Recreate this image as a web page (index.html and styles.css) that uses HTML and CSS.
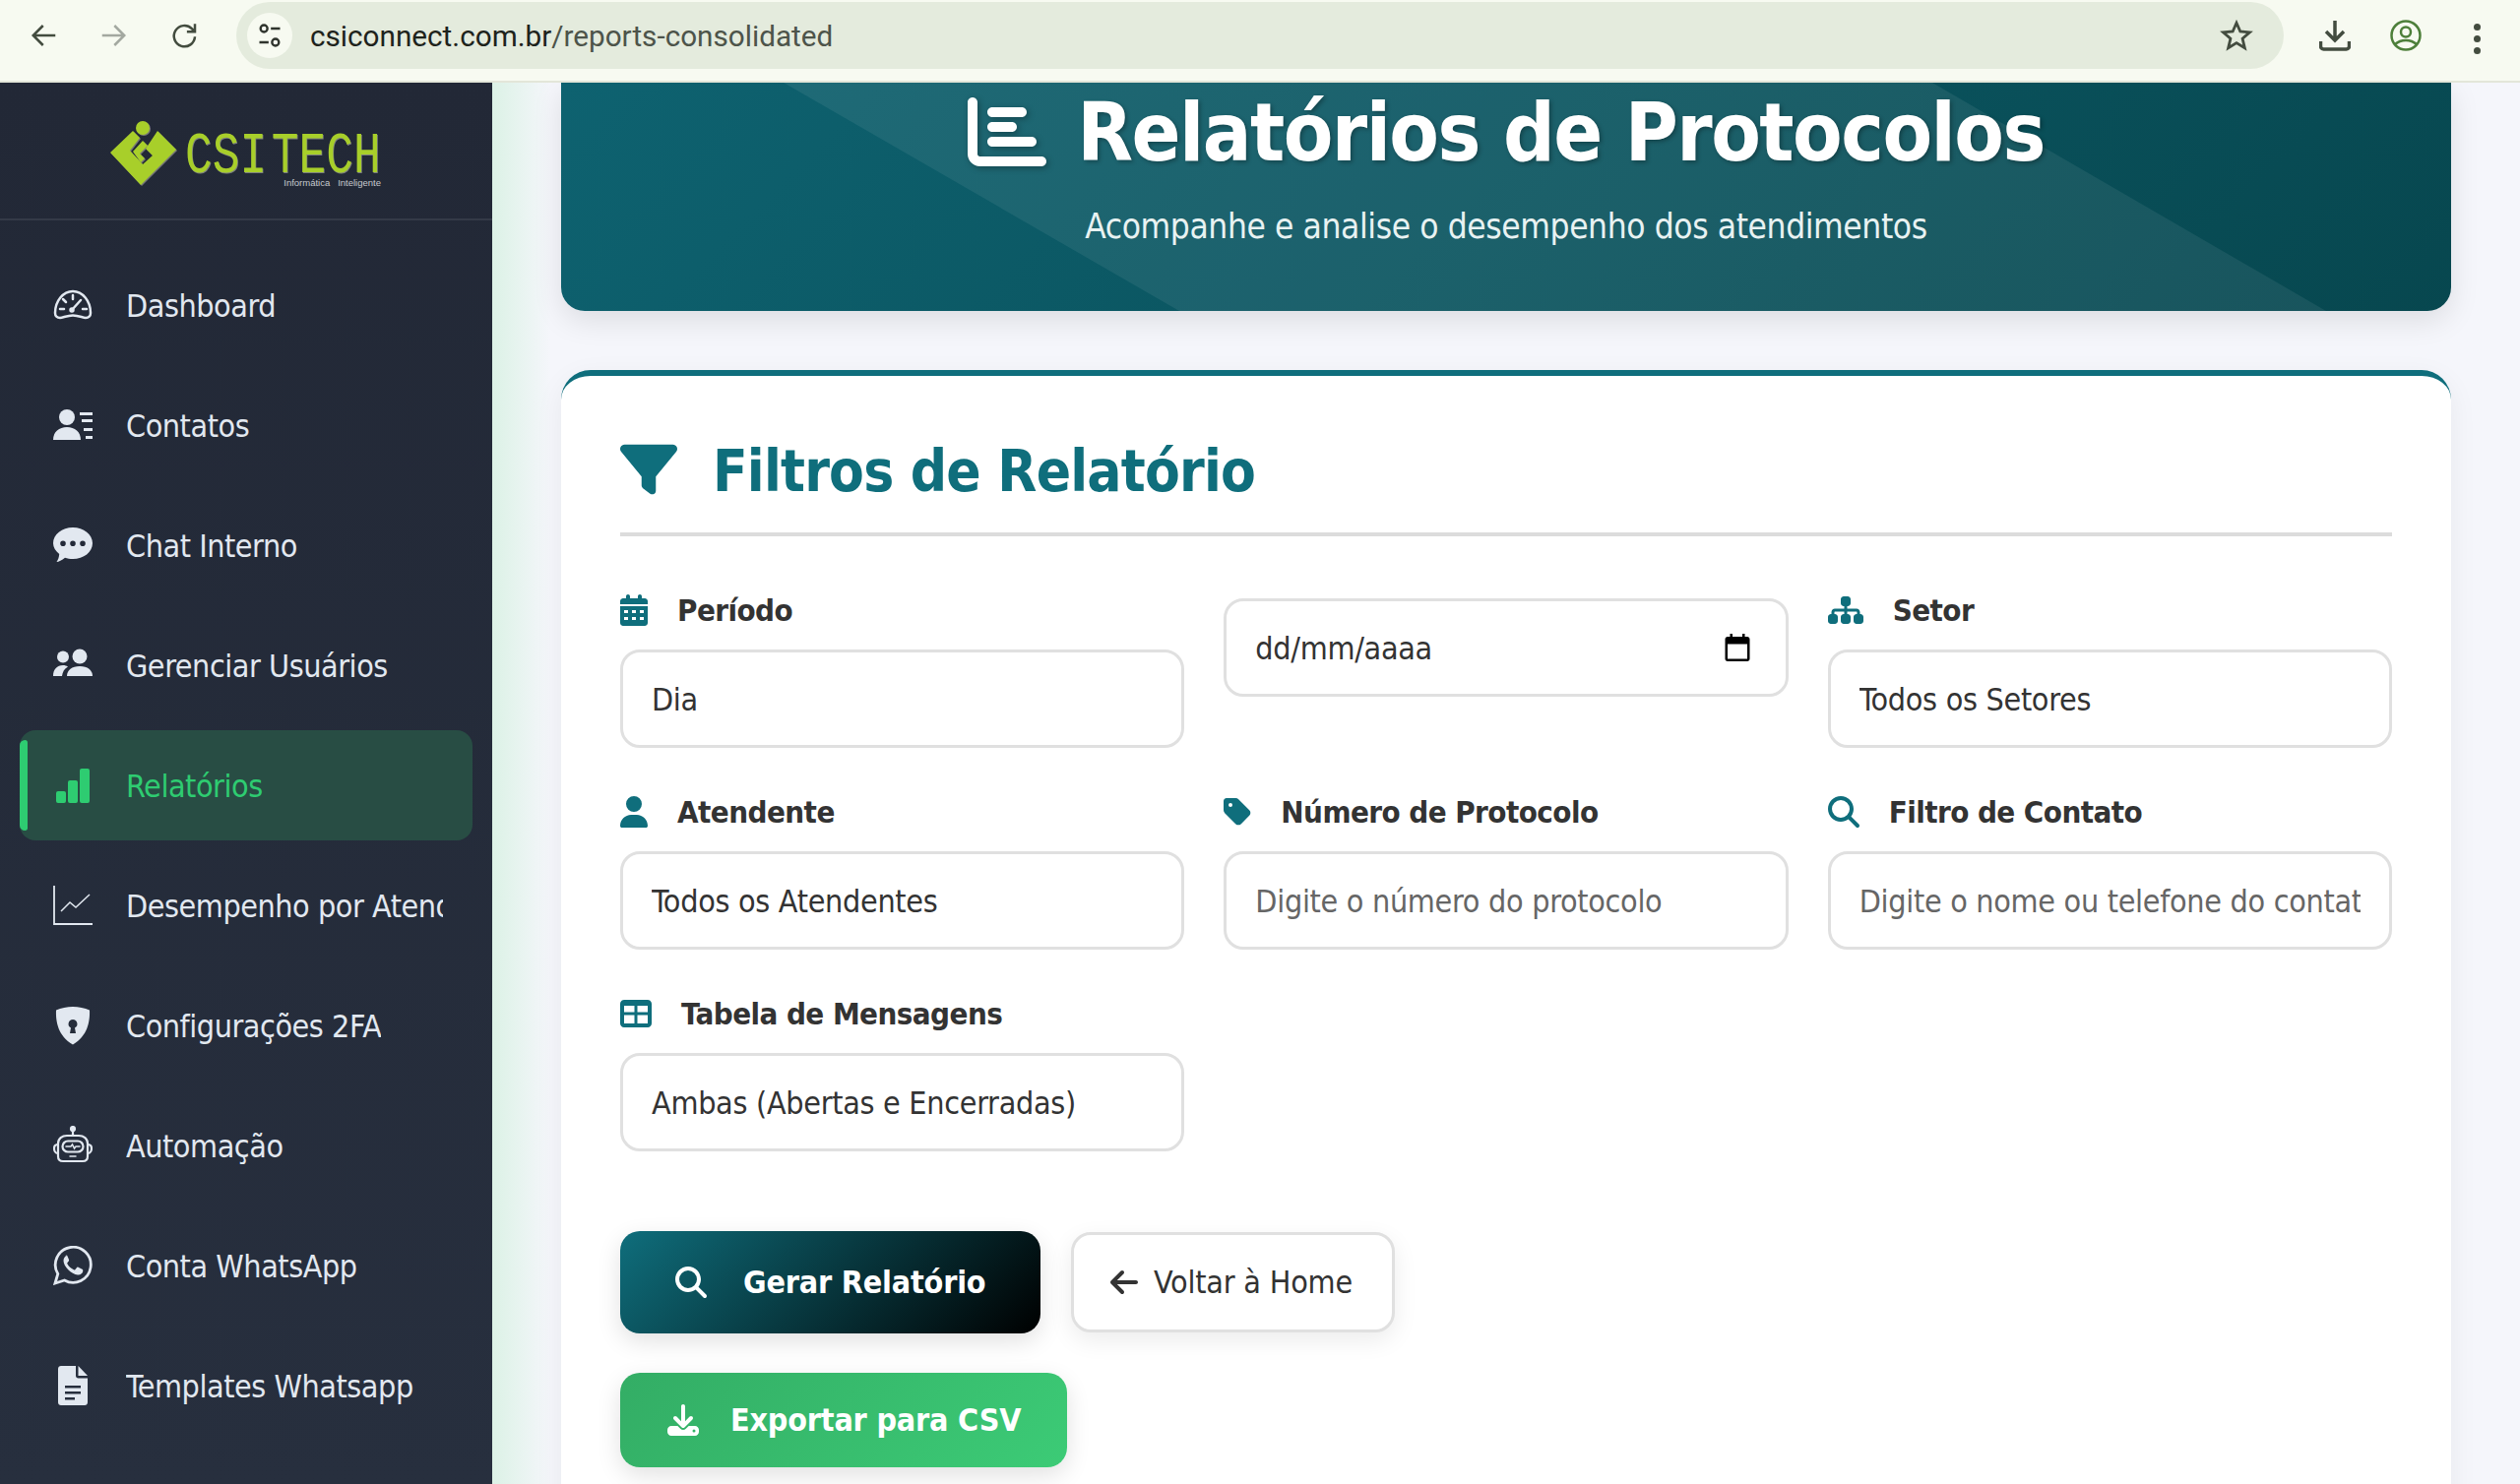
FILE: index.html
```html
<!DOCTYPE html>
<html lang="pt-BR">

<head>
    <meta charset="UTF-8">
    <title>Relatórios de Protocolos</title>
    <link rel="stylesheet" href="styles.css">
</head>

<body>

    <!-- Browser toolbar -->
    <header class="toolbar">
        <svg class="tb-icon tb-back" viewBox="0 0 24 24"><path d="M21 12H4M11 4l-8 8 8 8"/></svg>
        <svg class="tb-icon tb-forward" viewBox="0 0 24 24"><path d="M3 12h17M13 4l8 8-8 8"/></svg>
        <svg class="tb-icon tb-reload" viewBox="0 0 24 24"><path d="M20 13a8.5 8.5 0 1 1-2.5-6.5L20 9M20 2.5V9h-6.500"/></svg>
        <div class="omnibox">
            <span class="site-info">
                <svg viewBox="0 0 24 24"><circle cx="7" cy="6" r="3"/><path d="M13 6h8M3 18h8"/><circle cx="17" cy="18" r="3"/></svg>
            </span>
            <span class="url"><span class="url-host">csiconnect.com.br</span>/reports-consolidated</span>
            <svg class="tb-star" viewBox="0 0 24 24"><path d="M12 3l2.700 6.200 6.800.6-5.200 4.500 1.600 6.700-5.900-3.600-5.900 3.600 1.600-6.700-5.200-4.500 6.800-.6z"/></svg>
        </div>
        <svg class="tb-download" viewBox="0 0 32 32"><path d="M16 1v18M7 12l9 9 9-9" fill="none"/><path d="M1.500 22v5a3 3 0 0 0 3 3h23a3 3 0 0 0 3-3v-5" fill="none"/></svg>
        <svg class="tb-profile" viewBox="0 0 32 32"><circle cx="16" cy="16" r="14.500"/><circle cx="16" cy="12.500" r="5"/><path d="M5 25c6-5.500 16-5.500 22 0"/></svg>
        <div class="tb-menu"><i></i><i></i><i></i></div>
    </header>

    <div class="layout">

        <!-- Sidebar -->
        <aside class="sidebar">
            <div class="logo">
                <svg class="logo-mark" viewBox="0 0 68 66">
                    <circle cx="33" cy="7" r="7"/>
                    <path d="M23 10l7 7-10 13 13 14 10-9-7-7 12-18 19 19-36 36L0 32z"/>
                    <path d="M33 20l5 5-8 8 5 5-4 4-8-11z"/>
                </svg>
                <div class="logo-words">
                    <div class="logo-name"><span>CSI TECH</span></div>
                    <div class="logo-tag">Informática &nbsp; Inteligente</div>
                </div>
            </div>
            <nav class="menu">
                <a class="menu-item">
                    <svg class="menu-icon" viewBox="0 0 40 40" fill="none" stroke="currentColor" stroke-width="2.500" stroke-linecap="round"><path d="M7 33c-3 0-5-2-5-5C2 16 10 6 20 6s18 10 18 22c0 3-2 5-5 5-3 0-7-2.500-13-2.500S10 33 7 33z"/><path d="M19 25l9-10M20 10v4M10 14l3 3M7 24h4M30 24h4"/><circle cx="19" cy="25" r="1.500"/></svg>
                    <span class="menu-label">Dashboard</span>
                </a>
                <a class="menu-item">
                    <svg class="menu-icon" viewBox="0 0 40 40" fill="currentColor"><circle cx="14" cy="12" r="8"/><path d="M0 35c0-8 6-13 14-13s14 5 14 13z"/><path d="M27 7h13v3H27zM29 14h11v3H29zM31 23h9v3h-9zM33 31h7v3h-7z"/></svg>
                    <span class="menu-label">Contatos</span>
                </a>
                <a class="menu-item">
                    <svg class="menu-icon" viewBox="0 0 40 40" fill="currentColor"><path fill-rule="evenodd" d="M20 2c11 0 20 7 20 16s-9 16-20 16c-3 0-5.500-.5-8-1.300C9 35 5.500 37 3.500 37c1.500-2 2.500-5 2.700-8C2.500 26 0 22.200 0 18 0 9 9 2 20 2zM10 15.500a2.800 2.800 0 1 0 0 5.600 2.800 2.800 0 0 0 0-5.600zm10 0a2.800 2.800 0 1 0 0 5.600 2.800 2.800 0 0 0 0-5.600zm10 0a2.800 2.800 0 1 0 0 5.600 2.800 2.800 0 0 0 0-5.600z"/></svg>
                    <span class="menu-label">Chat Interno</span>
                </a>
                <a class="menu-item">
                    <svg class="menu-icon" viewBox="0 0 40 40" fill="currentColor"><circle cx="10" cy="11.500" r="6"/><circle cx="27" cy="11" r="7.500"/><path d="M0 31c0-7 4-11 10-11 2 0 3.500.5 5 1.500-3.500 2-5.500 5-6 9.500z"/><path d="M14 31c0-6 5-10 13-10s13 4 13 10z"/></svg>
                    <span class="menu-label">Gerenciar Usuários</span>
                </a>
                <a class="menu-item is-active">
                    <svg class="menu-icon" viewBox="0 0 40 40" fill="currentColor"><rect x="3" y="26" width="10" height="12" rx="2"/><rect x="15" y="15" width="10" height="23" rx="2"/><rect x="27" y="3" width="10" height="35" rx="2"/></svg>
                    <span class="menu-label">Relatórios</span>
                </a>
                <a class="menu-item">
                    <svg class="menu-icon" viewBox="0 0 40 40" fill="none" stroke="currentColor" stroke-width="1.800"><path d="M1 0v39h39"/><path d="M8 26l9-9 6 5 14-13" stroke-width="1.500"/></svg>
                    <span class="menu-label">Desempenho por Atendente</span>
                </a>
                <a class="menu-item">
                    <svg class="menu-icon" viewBox="0 0 40 40" fill="currentColor"><path fill-rule="evenodd" d="M20 1c6 0 12 1.500 17 3.500.5 12-2 26-17 35C5 30.500 2.500 16.500 3 4.500 8 2.500 14 1 20 1zm0 13a4.500 4.500 0 0 0-2 8.500L17 28h6l-1-5.500A4.500 4.500 0 0 0 20 14z"/></svg>
                    <span class="menu-label">Configurações 2FA</span>
                </a>
                <a class="menu-item">
                    <svg class="menu-icon" viewBox="0 0 40 40" fill="none" stroke="currentColor" stroke-width="2.200" stroke-linecap="round"><circle cx="20" cy="3" r="2" fill="currentColor"/><path d="M20 5v5"/><path d="M14 10h12c5 0 9 3 9 8v13c0 3-2 5-5 5H10c-3 0-5-2-5-5V18c0-5 4-8 9-8z"/><path d="M5 19c-3 0-4 2-4 4s1 5 4 5M35 19c3 0 4 2 4 4s-1 5-4 5"/><rect x="9.500" y="15.500" width="21" height="11" rx="5.500"/><path d="M13 21h5l1.500-2 2 4 1.500-2h4M17 31h6" stroke-width="1.500"/></svg>
                    <span class="menu-label">Automação</span>
                </a>
                <a class="menu-item">
                    <svg class="menu-icon" viewBox="0 0 40 40"><path fill="none" stroke="currentColor" stroke-width="2.800" d="M2 38l2.800-9.500A18 18 0 1 1 11.500 35z"/><path fill="currentColor" d="M14 10c-1.500 0-3.500 2-3.500 5 0 6 8 14 14.500 14.500 3 .2 5-2 5.200-3.500.2-1.200 0-2-.7-2.300l-4-2c-.8-.3-1.300 0-1.800.7l-1.400 1.800c-.4.400-.8.400-1.400.1-3-1.400-5-3.300-6.500-6-.3-.6-.2-1 .2-1.400l1.200-1.500c.4-.5.400-1 .2-1.500l-1.600-3.700c-.3-.8-.9-.9-1.900-.9z"/></svg>
                    <span class="menu-label">Conta WhatsApp</span>
                </a>
                <a class="menu-item">
                    <svg class="menu-icon" viewBox="0 0 40 40" fill="currentColor"><path fill-rule="evenodd" d="M8 0h15v10c0 1.500 1 2.500 2.500 2.500H35V37c0 1.700-1.300 3-3 3H8c-1.700 0-3-1.300-3-3V3c0-1.700 1.300-3 3-3zm4 20v2.500h16V20zm0 6v2.500h16V26zm0 6v2.500h10V32z"/><path d="M25.500 0L35 10h-9.500z"/></svg>
                    <span class="menu-label">Templates Whatsapp</span>
                </a>
            </nav>
        </aside>

        <!-- Main content -->
        <main class="content">
            <section class="banner">
                <h1 class="banner-title">
                    <svg class="banner-icon" viewBox="0 0 512 512"><path d="M32 32c17.700 0 32 14.300 32 32V400c0 8.800 7.200 16 16 16H480c17.700 0 32 14.300 32 32s-14.300 32-32 32H80c-44.200 0-80-35.800-80-80V64C0 46.300 14.300 32 32 32zm96 96c0-17.700 14.300-32 32-32l192 0c17.700 0 32 14.300 32 32s-14.300 32-32 32l-192 0c-17.700 0-32-14.300-32-32zm32 64H288c17.700 0 32 14.300 32 32s-14.300 32-32 32H160c-17.700 0-32-14.300-32-32s14.300-32 32-32zm0 96H416c17.700 0 32 14.300 32 32s-14.300 32-32 32H160c-17.700 0-32-14.300-32-32s14.300-32 32-32z"/></svg>
                    Relatórios de Protocolos
                </h1>
                <p class="banner-sub">Acompanhe e analise o desempenho dos atendimentos</p>
            </section>

            <section class="card">
                <h2 class="card-title">
                    <svg class="card-icon" viewBox="0 0 512 512"><path d="M3.900 54.900C10.500 40.900 24.500 32 40 32H472c15.500 0 29.500 8.900 36.100 22.900s4.600 30.500-5.200 42.500L320 320.900V448c0 12.100-6.800 23.200-17.700 28.600s-23.800 4.300-33.500-3l-64-48c-8.100-6-12.800-15.500-12.800-25.600V320.900L9 97.300C-.7 85.400-2.800 68.800 3.900 54.900z"/></svg>
                    Filtros de Relatório
                </h2>

                <div class="filters">
                    <div class="field">
                        <label class="field-label">
                            <svg class="label-icon w-28" viewBox="0 0 448 512"><path fill-rule="evenodd" d="M128 0c17.700 0 32 14.300 32 32V64H288V32c0-17.700 14.300-32 32-32s32 14.300 32 32V64h48c26.500 0 48 21.500 48 48v48H0V112C0 85.500 21.500 64 48 64H96V32c0-17.700 14.300-32 32-32zM0 192H448V464c0 26.500-21.500 48-48 48H48c-26.500 0-48-21.500-48-48V192zm64 64v48h64V256zm128 0v48h64V256zm128 0v48h64V256zM64 368v48h64V368zm128 0v48h64V368zm128 0v48h64V368z"/></svg>
                            Período
                        </label>
                        <select class="control"><option>Dia</option></select>
                    </div>
                    <div class="field">
                        <div class="control date-control">
                            <span>dd/mm/aaaa</span>
                            <svg class="date-icon" viewBox="0 0 24 24"><path fill-rule="evenodd" d="M4 4h2V1.500h2V4h8V1.500h2V4h2c1.100 0 2 .9 2 2v16c0 1.100-.9 2-2 2H4c-1.100 0-2-.9-2-2V6c0-1.100.9-2 2-2zm0 6v12h16V10z"/></svg>
                        </div>
                    </div>
                    <div class="field">
                        <label class="field-label">
                            <svg class="label-icon w-36" viewBox="0 0 576 512"><path d="M208 80c0-26.500 21.500-48 48-48h64c26.500 0 48 21.500 48 48v64c0 26.500-21.500 48-48 48h-8v40H464c30.900 0 56 25.100 56 56v32h8c26.500 0 48 21.500 48 48v64c0 26.500-21.500 48-48 48H464c-26.500 0-48-21.500-48-48V368c0-26.500 21.500-48 48-48h8V288c0-4.400-3.600-8-8-8H312v40h8c26.500 0 48 21.500 48 48v64c0 26.500-21.500 48-48 48H256c-26.500 0-48-21.500-48-48V368c0-26.500 21.500-48 48-48h8V280H112c-4.400 0-8 3.600-8 8v32h8c26.500 0 48 21.500 48 48v64c0 26.500-21.500 48-48 48H48c-26.500 0-48-21.500-48-48V368c0-26.500 21.500-48 48-48h8V288c0-30.900 25.100-56 56-56H264V192h-8c-26.500 0-48-21.500-48-48V80z"/></svg>
                            Setor
                        </label>
                        <select class="control"><option>Todos os Setores</option></select>
                    </div>
                    <div class="field">
                        <label class="field-label">
                            <svg class="label-icon w-28" viewBox="0 0 448 512"><path d="M224 256A128 128 0 1 0 224 0a128 128 0 1 0 0 256zm-45.700 48C79.800 304 0 383.800 0 482.300C0 498.700 13.300 512 29.700 512H418.300c16.400 0 29.700-13.300 29.700-29.700C448 383.800 368.200 304 269.700 304H178.300z"/></svg>
                            Atendente
                        </label>
                        <select class="control"><option>Todos os Atendentes</option></select>
                    </div>
                    <div class="field">
                        <label class="field-label">
                            <svg class="label-icon w-28" viewBox="0 0 448 512"><path d="M0 80V229.500c0 17 6.700 33.300 18.700 45.300l176 176c25 25 65.500 25 90.500 0L418.700 317.300c25-25 25-65.500 0-90.500l-176-176c-12-12-28.300-18.700-45.300-18.700H48C21.500 32 0 53.500 0 80zm112 32a32 32 0 1 1 0 64 32 32 0 1 1 0-64z"/></svg>
                            Número de Protocolo
                        </label>
                        <input class="control" type="text" placeholder="Digite o número do protocolo">
                    </div>
                    <div class="field">
                        <label class="field-label">
                            <svg class="label-icon w-32" viewBox="0 0 512 512"><path d="M416 208c0 45.900-14.900 88.300-40 122.700L502.600 457.400c12.500 12.500 12.500 32.800 0 45.300s-32.800 12.500-45.300 0L330.700 376c-34.400 25.200-76.800 40-122.700 40C93.100 416 0 322.900 0 208S93.100 0 208 0S416 93.100 416 208zM208 352a144 144 0 1 0 0-288 144 144 0 1 0 0 288z"/></svg>
                            Filtro de Contato
                        </label>
                        <input class="control" type="text" placeholder="Digite o nome ou telefone do contato">
                    </div>
                    <div class="field">
                        <label class="field-label">
                            <svg class="label-icon w-32" viewBox="0 0 512 512"><path fill-rule="evenodd" d="M64 32C28.700 32 0 60.700 0 96V416c0 35.300 28.700 64 64 64H448c35.300 0 64-28.700 64-64V96c0-35.300-28.700-64-64-64H64zm0 96H232v104H64V128zm216 0H448v104H280V128zM64 280H232v136H64V280zm216 0H448v136H280V280z"/></svg>
                            Tabela de Mensagens
                        </label>
                        <select class="control"><option>Ambas (Abertas e Encerradas)</option></select>
                    </div>
                </div>

                <div class="actions">
                    <button class="btn btn-primary">
                        <svg class="btn-icon" viewBox="0 0 512 512"><path d="M416 208c0 45.900-14.900 88.300-40 122.700L502.600 457.400c12.500 12.500 12.500 32.800 0 45.300s-32.800 12.500-45.300 0L330.700 376c-34.400 25.200-76.800 40-122.700 40C93.100 416 0 322.900 0 208S93.100 0 208 0S416 93.100 416 208zM208 352a144 144 0 1 0 0-288 144 144 0 1 0 0 288z"/></svg>
                        Gerar Relatório
                    </button>
                    <button class="btn btn-back">
                        <svg class="btn-icon" viewBox="0 0 448 512"><path d="M9.400 233.400c-12.500 12.500-12.500 32.800 0 45.300l160 160c12.500 12.500 32.800 12.500 45.300 0s12.500-32.800 0-45.300L109.200 288 416 288c17.700 0 32-14.300 32-32s-14.300-32-32-32l-306.700 0L214.600 118.600c12.500-12.500 12.500-32.800 0-45.300s-32.800-12.500-45.300 0l-160 160z"/></svg>
                        Voltar à Home
                    </button>
                </div>
                <div class="actions actions-export">
                    <button class="btn btn-export">
                        <svg class="btn-icon" viewBox="0 0 512 512"><path d="M288 32c0-17.700-14.300-32-32-32s-32 14.300-32 32V274.700l-73.400-73.400c-12.500-12.500-32.800-12.500-45.300 0s-12.500 32.800 0 45.300l128 128c12.500 12.500 32.800 12.500 45.300 0l128-128c12.500-12.500 12.500-32.800 0-45.300s-32.800-12.500-45.300 0L288 274.700V32zM64 352c-35.300 0-64 28.700-64 64v32c0 35.300 28.700 64 64 64H448c35.300 0 64-28.700 64-64V416c0-35.300-28.700-64-64-64H346.500l-45.300 45.300c-25 25-65.500 25-90.500 0L165.500 352H64zm368 56a24 24 0 1 1 0 48 24 24 0 1 1 0-48z"/></svg>
                        Exportar para CSV
                    </button>
                </div>
            </section>
        </main>
    </div>

</body>

</html>
```

FILE: styles.css
```css
/* General Reset */
* {
    margin: 0;
    padding: 0;
    box-sizing: border-box;
}

html, body {
    height: 1508px;
    overflow: hidden;
}

body {
    font-family: "DejaVu Sans", Verdana, sans-serif;
    font-stretch: condensed;
    background-color: #f5f6fb;
    color: #333;
}

/* Browser toolbar */
.toolbar {
    height: 84px;
    display: flex;
    align-items: flex-start;
    padding-top: 2px;
    background-color: #f7faf1;
    border-bottom: 2px solid #e3e6d9;
    font-family: Roboto, sans-serif;
    font-stretch: normal;
}

.tb-icon {
    width: 30px;
    height: 30px;
    margin-top: 19px;
    fill: none;
    stroke: #434c3f;
    stroke-width: 2;
}

.tb-back {
    margin-left: 30px;
}

.tb-forward {
    margin-left: 40px;
    stroke: #a3a8a0;
}

.tb-reload {
    margin-left: 43px;
}

.omnibox {
    width: 2080px;
    height: 68px;
    margin-left: 37px;
    display: flex;
    align-items: center;
    padding-left: 11px;
    background-color: #e4ebdd;
    border-radius: 34px;
}

.site-info {
    width: 46px;
    height: 46px;
    display: flex;
    align-items: center;
    justify-content: center;
    background-color: #f7faf1;
    border-radius: 50%;
}

.site-info svg {
    width: 28px;
    height: 28px;
    fill: none;
    stroke: #2f342d;
    stroke-width: 2;
}

.url {
    margin-left: 18px;
    font-size: 29.700px;
    color: #4d544a;
}

.url-host {
    color: #1e231c;
}

.tb-star {
    width: 34px;
    height: 34px;
    margin-left: auto;
    margin-right: 31px;
    fill: none;
    stroke: #434c3f;
    stroke-width: 2;
}

.tb-download {
    width: 32px;
    height: 32px;
    margin: 18px 0 0 36px;
    stroke: #434c3f;
    stroke-width: 3.500;
}

.tb-profile {
    width: 32px;
    height: 32px;
    margin: 18px 0 0 40px;
    fill: none;
    stroke: #4d7f3a;
    stroke-width: 2.500;
}

.tb-menu {
    display: flex;
    flex-direction: column;
    gap: 5px;
    margin: 22px 0 0 53px;
}

.tb-menu i {
    width: 7px;
    height: 7px;
    background-color: #434c3f;
    border-radius: 50%;
}

.layout {
    display: flex;
    height: 1424px;
}

/* Sidebar */
.sidebar {
    width: 500px;
    flex-shrink: 0;
    background: linear-gradient(180deg, #222836, #272f3e);
}

.logo {
    height: 140px;
    display: flex;
    padding: 39px 0 0 112px;
    border-bottom: 2px solid #343a47;
}

.logo-mark {
    width: 68px;
    height: 66px;
    fill: #a8cf2a;
    filter: drop-shadow(1px 1px 0 #777);
}

.logo-words {
    width: 199px;
    margin-left: 8px;
}

.logo-name {
    height: 45px;
    margin-top: 14px;
    font-family: "Liberation Mono", monospace;
    font-stretch: normal;
    font-size: 60px;
    line-height: 45px;
    word-spacing: -30px;
    color: #a8cf2a;
    white-space: nowrap;
}

.logo-name span {
    display: inline-block;
    transform: scaleX(.77);
    transform-origin: left center;
    text-shadow: 1px 1px 0 #7d8080;
}

.logo-tag {
    margin-top: -2px;
    font-family: "Liberation Sans", sans-serif;
    font-stretch: normal;
    font-size: 9.500px;
    text-align: right;
    color: #c6c9ce;
}

.menu {
    padding-top: 30px;
}

.menu-item {
    height: 112px;
    margin: 0 20px 10px;
    padding: 0 30px 0 34px;
    display: flex;
    align-items: center;
    gap: 34px;
    position: relative;
    color: #e2e8f0;
    font-size: 32px;
    letter-spacing: -.45px;
    border-radius: 16px;
}

.menu-icon {
    width: 40px;
    height: 40px;
    flex-shrink: 0;
}

.menu-label {
    padding-top: 2px;
    white-space: nowrap;
    overflow: hidden;
}

.menu-item.is-active {
    background-color: #284d44;
    color: #2ecc71;
}

.menu-item.is-active::before {
    content: "";
    position: absolute;
    left: 0;
    top: 10px;
    bottom: 10px;
    width: 8px;
    background-color: #2ecc71;
    border-radius: 8px 4px 4px 8px;
}

/* Main content */
.content {
    flex: 1;
    padding: 0 70px;
    overflow: hidden;
    background: linear-gradient(90deg, #dcf2e6 0, #f5f6fb 60px);
}

.banner {
    height: 232px;
    position: relative;
    display: flex;
    flex-direction: column;
    align-items: center;
    overflow: hidden;
    color: #fff;
    background: linear-gradient(135deg, #0e6270, #07474f);
    border-radius: 0 0 24px 24px;
    margin-bottom: 60px;
    box-shadow: 0 10px 30px rgba(0, 0, 0, .1);
}

.banner::before {
    content: "";
    position: absolute;
    inset: 0;
    background-color: rgba(255, 255, 255, .07);
    clip-path: polygon(226px 0, 1393px 0, 1793px 100%, 628px 100%);
}

.banner-title {
    position: relative;
    display: flex;
    align-items: center;
    gap: 31px;
    height: 96px;
    margin-top: 2px;
    font-size: 82px;
    letter-spacing: -1.550px;
    font-weight: 700;
    text-shadow: 2px 2px 4px rgba(0, 0, 0, .3);
}

.banner-icon {
    width: 80px;
    height: 80px;
    fill: #fff;
    filter: drop-shadow(2px 2px 3px rgba(0, 0, 0, .3));
}

.banner-sub {
    position: relative;
    margin-top: 26px;
    font-size: 35px;
    letter-spacing: -.4px;
    line-height: 44px;
    color: #e8f2f2;
}

/* Filter card */
.card {
    padding: 60px 60px 0;
    height: 1200px;
    background-color: #fff;
    border-top: 6px solid #0f6e7c;
    border-radius: 30px 30px 0 0;
    box-shadow: 0 8px 30px rgba(0, 0, 0, .06);
}

.card-title {
    display: flex;
    align-items: center;
    gap: 36px;
    padding: 3px 0 28px;
    margin-bottom: 63px;
    box-sizing: content-box;
    height: 68px;
    font-size: 58px;
    letter-spacing: -.8px;
    font-weight: 700;
    color: #0f6e7c;
    border-bottom: 4px solid #dcdcdc;
}

.card-icon {
    width: 58px;
    height: 58px;
    margin-top: -5px;
    fill: #0f6e7c;
}

.filters {
    display: grid;
    grid-template-columns: repeat(3, 1fr);
    column-gap: 40px;
    row-gap: 53px;
}

.field-label {
    display: flex;
    align-items: center;
    gap: 30px;
    height: 24px;
    margin: 0 0 28px;
    font-size: 31px;
    letter-spacing: -.55px;
    font-weight: 700;
    color: #333;
}

.label-icon {
    height: 32px;
    flex-shrink: 0;
    fill: #0f6e7c;
}

.w-28 { width: 28px; }
.w-32 { width: 32px; }
.w-36 { width: 36px; }

.control {
    display: block;
    width: 100%;
    height: 100px;
    padding: 2px 29px 0;
    appearance: none;
    font-family: inherit;
    font-stretch: condensed;
    font-size: 32px;
    letter-spacing: -.3px;
    color: #333;
    background-color: #fff;
    border: 3px solid #e0e0e0;
    border-radius: 20px;
    outline: none;
}

.control::placeholder {
    color: #666;
}

.date-control {
    display: flex;
    align-items: center;
    justify-content: space-between;
}

.date-icon {
    width: 30px;
    height: 32px;
    margin: -4px 5px 0 0;
    fill: #000;
}

/* Buttons */
.actions {
    display: flex;
    align-items: center;
    gap: 31px;
    margin-top: 81px;
}

.actions-export {
    margin-top: 40px;
}

.btn {
    display: flex;
    align-items: center;
    font-family: inherit;
    font-stretch: condensed;
    font-size: 32px;
    letter-spacing: -.2px;
    border: none;
    border-radius: 20px;
}

.btn-icon {
    width: 32px;
    height: 32px;
    flex-shrink: 0;
    fill: currentColor;
}

.btn-primary {
    width: 427px;
    height: 104px;
    padding-left: 56px;
    gap: 37px;
    font-weight: 700;
    color: #fff;
    background: linear-gradient(135deg, #0f6e7c, #000);
    box-shadow: 0 8px 25px rgba(0, 0, 0, .12);
}

.btn-back {
    width: 329px;
    height: 102px;
    padding-left: 37px;
    gap: 16px;
    color: #333;
    background-color: #fff;
    border: 3px solid #e0e0e0;
    box-shadow: 0 8px 25px rgba(0, 0, 0, .08);
}

.btn-back .btn-icon {
    width: 28px;
}

.btn-export {
    width: 454px;
    height: 96px;
    padding-left: 48px;
    gap: 32px;
    font-weight: 700;
    color: #fff;
    background: linear-gradient(135deg, #33ad65, #3ccb76);
    box-shadow: 0 8px 25px rgba(0, 0, 0, .12);
}
```
